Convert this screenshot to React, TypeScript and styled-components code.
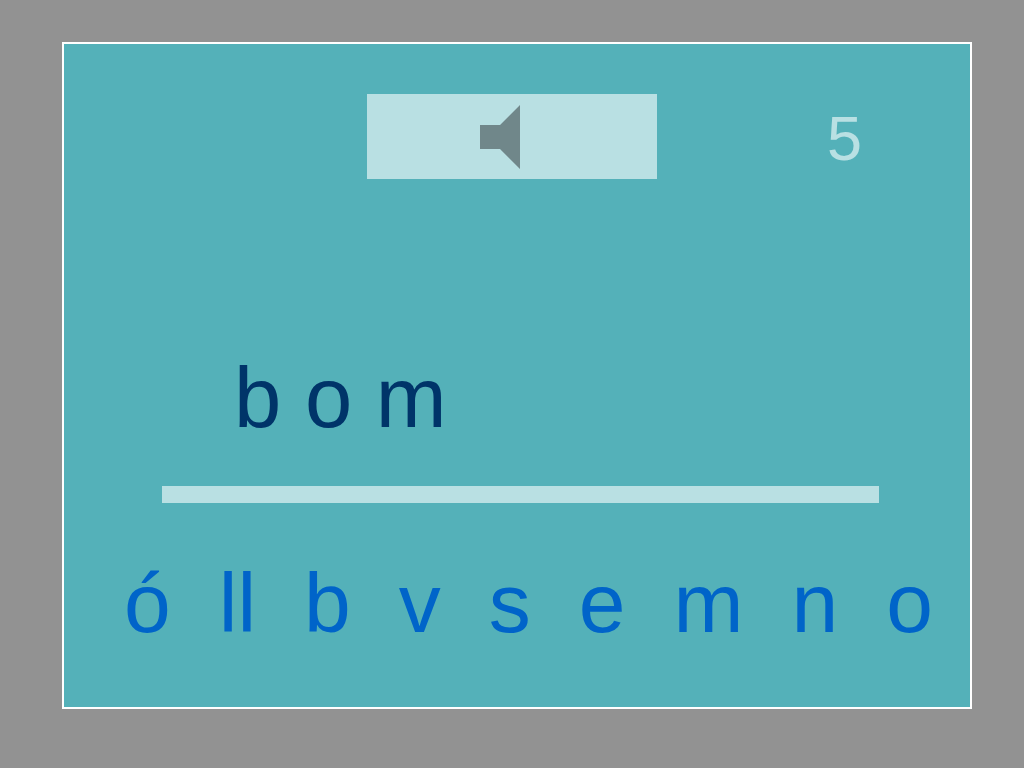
import React, { useState } from "react";
import styled, { createGlobalStyle } from "styled-components";

const GlobalStyle = createGlobalStyle`
  * { box-sizing: border-box; }
  body {
    margin: 0;
    background: #929292;
    font-family: "Liberation Sans", Arial, sans-serif;
  }
`;

const Page = styled.div`
  display: flex;
  min-height: 100vh;
  padding: 42px 52px 59px 62px;
`;

const Board = styled.main`
  flex: 1;
  display: flex;
  flex-direction: column;
  border: 2px solid #ffffff;
  background: #54b1b9;
`;

const TopBar = styled.header`
  display: grid;
  grid-template-columns: 1fr 290px 1fr;
  align-items: center;
  padding: 50px 10px 0 0;
`;

const ListenButton = styled.button`
  grid-column: 2;
  display: flex;
  align-items: center;
  justify-content: center;
  height: 85px;
  padding: 0 24px 0 0;
  border: 0;
  border-radius: 0;
  background: #b9e0e3;
  cursor: pointer;
`;

const Score = styled.output`
  padding: 2px 0 0 170px;
  color: #b9e0e3;
  font-size: 63px;
  line-height: 80px;
`;

const Answer = styled.output`
  display: block;
  min-height: 96px;
  margin: 171px 0 0 170px;
  color: #003469;
  font-size: 85px;
  line-height: 96px;
`;

const Rule = styled.hr`
  width: auto;
  height: 17px;
  margin: 40px 91px 0 98px;
  border: 0;
  background: #b9e0e3;
`;

const Tray = styled.div`
  display: flex;
  gap: 48px;
  margin: 52px 0 0 60px;
`;

const LetterButton = styled.button`
  padding: 0;
  border: 0;
  background: none;
  color: #0064c9;
  font: inherit;
  font-size: 84px;
  line-height: 96px;
  cursor: pointer;
`;

const tiles = ["ó", "ll", "b", "v", "s", "e", "m", "n", "o"];

export default function App() {
  const [picked, setPicked] = useState<string[]>(["b", "o", "m"]);

  return (
    <>
      <GlobalStyle />
      <Page>
        <Board>
          <TopBar>
            <ListenButton type="button" aria-label="Listen">
              <svg width="40" height="64" viewBox="0 0 40 64" aria-hidden="true">
                <path d="M0 20H20L40 0V64L20 44H0Z" fill="#70878a" />
              </svg>
            </ListenButton>
            <Score aria-label="Score">5</Score>
          </TopBar>
          <Answer aria-label="Answer">{picked.join(" ")}</Answer>
          <Rule />
          <Tray>
            {tiles.map((tile) => (
              <LetterButton
                key={tile}
                type="button"
                onClick={() => setPicked([...picked, tile])}
              >
                {tile}
              </LetterButton>
            ))}
          </Tray>
        </Board>
      </Page>
    </>
  );
}
